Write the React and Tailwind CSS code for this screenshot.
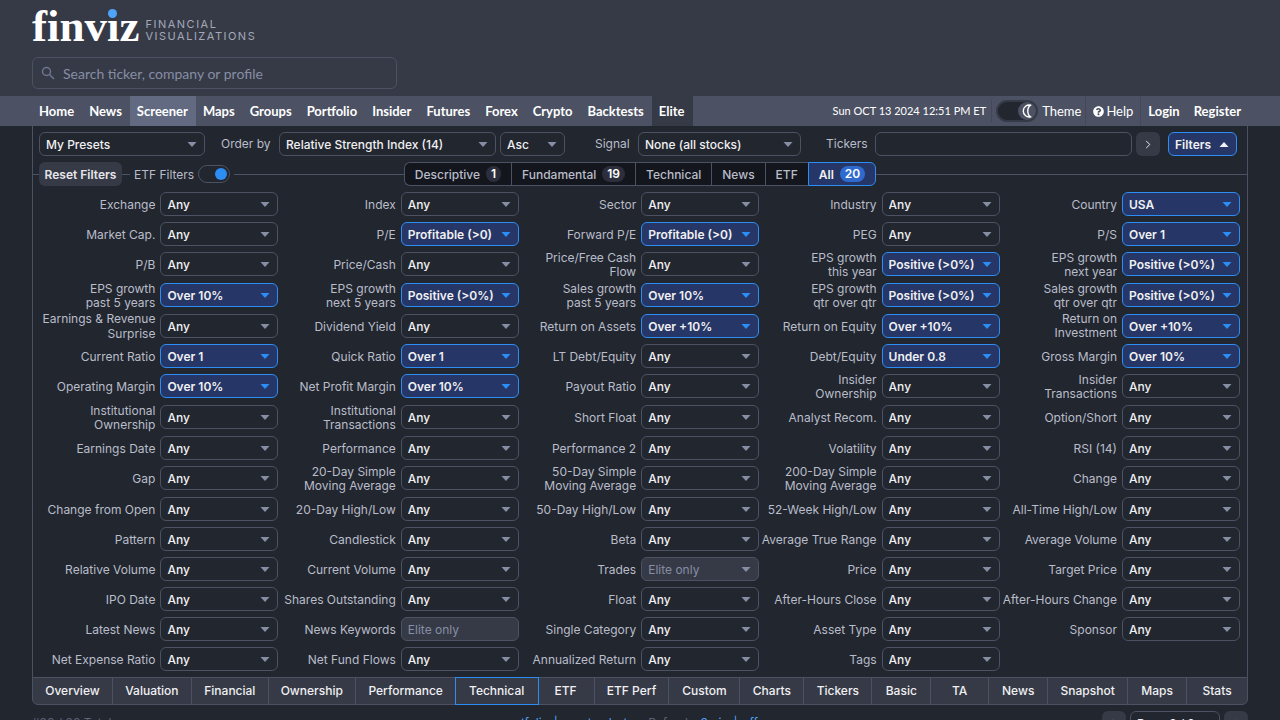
import React from "react";
import { FaQuestionCircle } from "react-icons/fa";

const NAV = ["Home", "News", "Screener", "Maps", "Groups", "Portfolio", "Insider", "Futures", "Forex", "Crypto", "Backtests", "Elite"];

const ROWS = [
  [["Exchange"], ["Index"], ["Sector"], ["Industry"], ["Country", "USA"]],
  [["Market Cap."], ["P/E", "Profitable (>0)"], ["Forward P/E", "Profitable (>0)"], ["PEG"], ["P/S", "Over 1"]],
  [["P/B"], ["Price/Cash"], ["Price/Free Cash\nFlow"], ["EPS growth\nthis year", "Positive (>0%)"], ["EPS growth\nnext year", "Positive (>0%)"]],
  [["EPS growth\npast 5 years", "Over 10%"], ["EPS growth\nnext 5 years", "Positive (>0%)"], ["Sales growth\npast 5 years", "Over 10%"], ["EPS growth\nqtr over qtr", "Positive (>0%)"], ["Sales growth\nqtr over qtr", "Positive (>0%)"]],
  [["Earnings & Revenue\nSurprise"], ["Dividend Yield"], ["Return on Assets", "Over +10%"], ["Return on Equity", "Over +10%"], ["Return on\nInvestment", "Over +10%"]],
  [["Current Ratio", "Over 1"], ["Quick Ratio", "Over 1"], ["LT Debt/Equity"], ["Debt/Equity", "Under 0.8"], ["Gross Margin", "Over 10%"]],
  [["Operating Margin", "Over 10%"], ["Net Profit Margin", "Over 10%"], ["Payout Ratio"], ["Insider\nOwnership"], ["Insider\nTransactions"]],
  [["Institutional\nOwnership"], ["Institutional\nTransactions"], ["Short Float"], ["Analyst Recom."], ["Option/Short"]],
  [["Earnings Date"], ["Performance"], ["Performance 2"], ["Volatility"], ["RSI (14)"]],
  [["Gap"], ["20-Day Simple\nMoving Average"], ["50-Day Simple\nMoving Average"], ["200-Day Simple\nMoving Average"], ["Change"]],
  [["Change from Open"], ["20-Day High/Low"], ["50-Day High/Low"], ["52-Week High/Low"], ["All-Time High/Low"]],
  [["Pattern"], ["Candlestick"], ["Beta"], ["Average True Range"], ["Average Volume"]],
  [["Relative Volume"], ["Current Volume"], ["Trades", "Elite only"], ["Price"], ["Target Price"]],
  [["IPO Date"], ["Shares Outstanding"], ["Float"], ["After-Hours Close"], ["After-Hours Change"]],
  [["Latest News"], ["News Keywords", "Elite only"], ["Single Category"], ["Asset Type"], ["Sponsor"]],
  [["Net Expense Ratio"], ["Net Fund Flows"], ["Annualized Return"], ["Tags"]],
];

const CATEGORIES = [
  ["Descriptive", 1], ["Fundamental", 19], ["Technical"], ["News"], ["ETF"], ["All", 20],
];

const VIEWS = ["Overview", "Valuation", "Financial", "Ownership", "Performance", "Technical", "ETF", "ETF Perf", "Custom", "Charts", "Tickers", "Basic", "TA", "News", "Snapshot", "Maps", "Stats"];

function Caret({ up, className = "" }) {
  return (
    <svg viewBox="0 0 10 5" className={`h-[5px] w-[10px] ${className}`} fill="currentColor" aria-hidden="true">
      <path d={up ? "M5 0 9.5 5H.5Z" : "M.5 0h9L5 5Z"} />
    </svg>
  );
}

function Select({ id, value, tone = "plain", className = "", label }) {
  const tones = {
    plain: "border-[#4c5263] bg-[#22262f] text-[#f0f0f2] font-medium",
    active: "border-[#2c8ef4] bg-[#263666] text-[#f0f0f2] font-semibold",
    disabled: "border-[#4c5263] bg-[#363a46] text-[#868ea5] font-normal",
  };
  return (
    <div className={`relative h-6 ${className}`}>
      <select
        id={id}
        aria-label={label}
        disabled={tone === "disabled"}
        className={`block h-6 w-full appearance-none rounded-md border pt-px pr-5 pl-[6px] text-[12px] leading-[20px] opacity-100 ${tones[tone]}`}
      >
        <option>{value}</option>
      </select>
      <Caret className={`pointer-events-none absolute top-[10px] right-[8px] ${tone === "active" ? "text-[#2c8ef4]" : "text-[#868ea5]"}`} />
    </div>
  );
}

function Filter({ name, value = "Any" }) {
  const id = "f-" + name.toLowerCase().replace(/[^a-z0-9]+/g, "-");
  const elite = value === "Elite only";
  const twoLines = name.includes("\n");
  const tone = elite ? "disabled" : value === "Any" ? "plain" : "active";
  return (
    <div className="flex items-start justify-end gap-[5px]">
      <label
        htmlFor={id}
        className={`flex items-center self-stretch text-right text-[12px] whitespace-pre text-[#b9bdc9] ${name.startsWith("Earnings &") ? "leading-[15px]" : "leading-[14px]"} ${twoLines ? "" : "max-h-[31px] pt-px"}`}
      >
        {name}
      </label>
      <div className="w-[118px] shrink-0 pt-[3px]">
        {name === "News Keywords" ? (
          <input id={id} disabled placeholder="Elite only" className="block h-6 w-full rounded-md border border-[#4c5263] bg-[#363a46] px-[6px] text-[12px] placeholder:text-[#868ea5]" />
        ) : (
          <Select id={id} value={value} tone={tone} />
        )}
      </div>
    </div>
  );
}

function Header() {
  return (
    <header>
      <div className="bg-[#363a46] px-8 pb-[7px]">
        <a href="#home" className="flex h-[57px] w-max items-start text-white" aria-label="finviz">
          <span className="relative block font-['Liberation_Serif',serif] text-[45px] leading-[52px] font-bold">
            finviz
            <span className="absolute top-[9px] left-[76px] h-[9px] w-[9px] rounded-full bg-[#4fa4f9] ring-2 ring-[#363a46]" />
          </span>
          <span className="mt-[18px] ml-[6px] text-[11px] leading-[12px] tracking-[1.5px] text-[#a3a9b9]">
            FINANCIAL
            <br />
            VISUALIZATIONS
          </span>
        </a>
        <label className="flex h-8 w-[365px] items-center gap-[8px] rounded-md border border-[#4c5263] pl-[8px]">
          <svg viewBox="0 0 14 14" className="h-[14px] w-[14px]" fill="none" stroke="#6d7590" strokeWidth="1.5" aria-hidden="true">
            <circle cx="5.5" cy="5.5" r="4" />
            <path d="m8.5 8.5 4.5 4.5" />
          </svg>
          <input aria-label="Search" placeholder="Search ticker, company or profile" className="min-w-0 flex-1 bg-transparent font-[Lato,sans-serif] text-[14px] text-white outline-none placeholder:text-[#868ea5]" />
        </label>
      </div>
      <nav className="flex h-[30px] items-center bg-[#4c5263] px-8 font-[Lato,sans-serif] text-[13px] leading-[30px] text-white">
        {NAV.map((n) => (
          <a
            key={n}
            href={"#" + n.toLowerCase()}
            className={`pr-2 pl-[7px] font-bold ${n === "Screener" ? "bg-[#616a80]" : ""} ${n === "Elite" ? "bg-[#363a46]" : ""}`}
          >
            {n}
          </a>
        ))}
        <div className="ml-auto flex h-full items-center">
          <span className="pr-[5px] text-[11px]">Sun OCT 13 2024 12:51 PM ET</span>
          <button className="flex h-[22px] items-center gap-1 border-l border-[#43485a] pl-1">
            <span className="flex h-[22px] w-[42px] items-center justify-end rounded-full border-2 border-[#363a46] bg-[#22262f]">
              <span className="flex h-[18px] w-[18px] items-center justify-center rounded-full bg-[#4c5263]">
                <svg viewBox="0 0 14 14" className="h-[14px] w-[14px]" fill="none" stroke="white" strokeWidth="1.4" aria-hidden="true">
                  <path d="M10.8 1.2A6 6 0 1 0 10.8 12.8C7 11 6.6 3.4 10.8 1.2Z" strokeLinejoin="round" />
                </svg>
              </span>
            </span>
            Theme
          </button>
          <a href="#help" className="ml-1 flex h-full items-center gap-[2px] border-l border-[#43485a] px-[7px]">
            <FaQuestionCircle className="h-[11px] w-[11px]" />
            Help
          </a>
          <a href="#login" className="border-l border-[#43485a] px-[7px] font-bold">Login</a>
          <a href="#register" className="px-[7px] font-bold">Register</a>
        </div>
      </nav>
    </header>
  );
}

function Controls() {
  return (
    <div className="flex items-center pt-[6px] pr-[10px] pl-[6px] text-[12px] text-[#b9bdc9]">
      <Select label="Presets" value="My Presets" className="w-[166px]" />
      <label htmlFor="order" className="ml-4 w-[58px]">Order by</label>
      <Select id="order" value="Relative Strength Index (14)" className="w-[217px]" />
      <Select label="Direction" value="Asc" className="ml-1 w-[65px]" />
      <label htmlFor="signal" className="ml-[30px] w-[43px]">Signal</label>
      <Select id="signal" value="None (all stocks)" className="w-[163px]" />
      <label htmlFor="tickers" className="ml-[25px] w-[49px]">Tickers</label>
      <input id="tickers" className="h-6 min-w-0 flex-1 rounded-md border border-[#4c5263] bg-transparent px-[6px]" />
      <button aria-label="Apply tickers" className="ml-1 flex h-6 w-6 items-center justify-center rounded-md bg-[#363a46]">
        <svg viewBox="0 0 6 10" className="h-[9px] w-[6px]" fill="none" stroke="white" strokeWidth="1" aria-hidden="true">
          <path d="m1 1 4 4-4 4" />
        </svg>
      </button>
      <button className="ml-2 flex h-6 w-[69px] items-center gap-2 rounded-md border border-[#2c8ef4] bg-[#263666] pt-px pl-[6px] font-semibold text-[#f0f0f2]">
        Filters
        <Caret up />
      </button>
    </div>
  );
}

function Categories() {
  return (
    <div className="mt-[6px] grid grid-cols-[1fr_auto_1fr] items-center text-[12px]">
      <div className="flex items-center">
        <span className="h-px w-[6px] bg-[#4c5263]" />
        <button className="h-6 w-[83px] rounded-md bg-[#363a46] pt-px font-semibold text-[#e6e7eb]">Reset Filters</button>
        <span className="mr-1 h-px w-2 bg-[#4c5263]" />
        <label className="flex items-center gap-1 text-[#b9bdc9]">
          <span className="pt-px">ETF Filters</span>
          <input type="checkbox" defaultChecked className="peer sr-only" />
          <span className="flex h-[18px] w-8 items-center justify-end rounded-full border border-[#4c5263] px-[2px]">
            <span className="h-3 w-3 rounded-full bg-[#2c8ef4]" />
          </span>
        </label>
        <span className="ml-1 h-px flex-1 bg-[#4c5263]" />
      </div>
      <div className="flex">
        {CATEGORIES.map(([name, count]) => (
          <button
            key={name}
            className={`flex h-6 items-center gap-[6px] border-y border-l px-[10px] first:rounded-l-md last:rounded-r-md last:border-r ${
              name === "All" ? "border-[#2c8ef4] bg-[#263666] font-semibold text-[#f0f0f2]" : "border-[#4c5263] bg-[#14161d] font-medium text-[#b9bdc9]"
            }`}
          >
            <span className="pt-px">{name}</span>
            {count && (
              <span className={`rounded-full px-[5px] leading-[16px] font-semibold text-white ${name === "All" ? "bg-[#2f6bce]" : "bg-[#2c2e3c]"}`}>{count}</span>
            )}
          </button>
        ))}
      </div>
      <span className="h-px bg-[#4c5263]" />
    </div>
  );
}

export default function App() {
  return (
    <div className="min-h-screen bg-[#22262f] font-[Inter,sans-serif]">
      <Header />
      <main className="px-8 pb-4">
        <section className="border-x border-[#4c5263]">
          <Controls />
          <Categories />
          <div className="pt-[3px] pr-[7px] pb-[3px] pl-[5px]">
            {ROWS.map((row, i) => (
              <div key={i} className={`grid grid-cols-5 ${i !== 4 && row.some(([n]) => n.includes("\n")) ? "min-h-[31px]" : "min-h-[30px]"}`}>
                {row.map(([name, value]) => (
                  <Filter key={name} name={name} value={value} />
                ))}
              </div>
            ))}
          </div>
        </section>
        <div className="grid grid-cols-[80fr_79fr_77fr_87fr_100fr_82fr_57fr_75fr_71fr_64fr_68fr_59fr_58fr_59fr_80fr_59fr_60fr] rounded-b-md border border-[#4c5263] bg-[#363a46] text-[12px] font-medium text-[#f0f0f2]">
          {VIEWS.map((v) => (
            <a
              key={v}
              href={"#" + v.toLowerCase().replace(" ", "-")}
              className={`flex h-[26px] items-center justify-center whitespace-nowrap ${
                v === "Technical" ? "outline outline-[#2c8ef4]" : v === "Stats" || v === "Performance" ? "" : "border-r border-[#4c5263]"
              }`}
            >
              {v}
            </a>
          ))}
        </div>
        <div className="mt-[6px] flex items-center justify-between text-[12px] text-[#5d6377]">
          <span>#20 / 20 Total</span>
          <div className="flex gap-[5px] text-[#4fa4f9]">
            <a href="#save">save as portfolio</a>
            <span>|</span>
            <a href="#alert">create alert</a>
            <span className="ml-4 text-[#5d6377]">Refresh:</span>
            <a href="#3min">3min</a>
            <span>|</span>
            <a href="#off">off</a>
          </div>
          <div className="flex gap-1">
            <button aria-label="Previous page" className="h-6 w-6 rounded-md bg-[#363a46] text-white">←</button>
            <Select label="Page" value="Page 2 / 2" className="w-[90px]" />
            <button aria-label="Next page" className="h-6 w-6 rounded-md bg-[#363a46] text-white">→</button>
          </div>
        </div>
      </main>
    </div>
  );
}
